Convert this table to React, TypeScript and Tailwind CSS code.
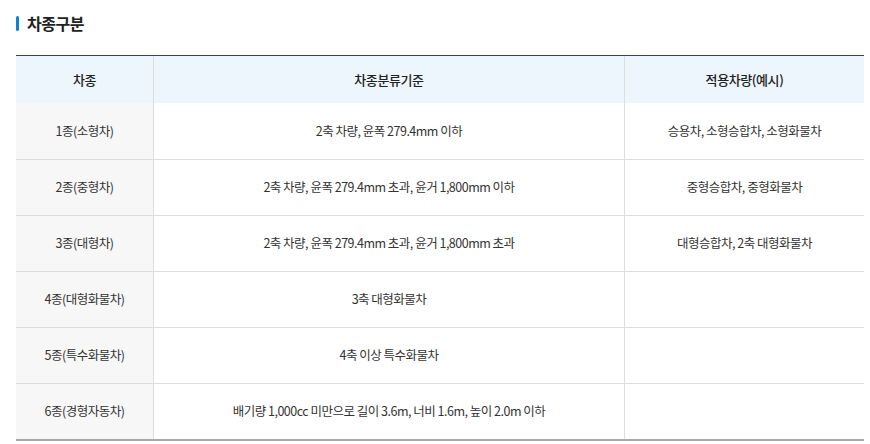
import React from 'react';

const rows = [
  { type: '1종(소형차)', rule: '2축 차량, 윤폭 279.4mm 이하', example: '승용차, 소형승합차, 소형화물차' },
  { type: '2종(중형차)', rule: '2축 차량, 윤폭 279.4mm 초과, 윤거 1,800mm 이하', example: '중형승합차, 중형화물차' },
  { type: '3종(대형차)', rule: '2축 차량, 윤폭 279.4mm 초과, 윤거 1,800mm 초과', example: '대형승합차, 2축 대형화물차' },
  { type: '4종(대형화물차)', rule: '3축 대형화물차', example: '' },
  { type: '5종(특수화물차)', rule: '4축 이상 특수화물차', example: '' },
  { type: '6종(경형자동차)', rule: '배기량 1,000cc 미만으로 길이 3.6m, 너비 1.6m, 높이 2.0m 이하', example: '' },
];

const App: React.FC = () => {
  return (
    <div
      className="w-[870px] h-[444px] bg-white overflow-hidden"
      style={{ fontFamily: '"Noto Sans CJK KR", "Noto Sans", sans-serif' }}
    >
      {/* Title */}
      <div className="flex items-center gap-2 pl-4 pt-[13px] h-[33px]">
        <span className="w-[3px] h-[15px] rounded-sm bg-[#0a84d6]" />
        <h2 className="text-[16px] font-bold text-[#222] tracking-[-0.5px] leading-none">차종구분</h2>
      </div>

      {/* Table */}
      <div className="ml-4 mt-[22px] w-[848px] border-t border-t-[#2b3f7a] border-b-2 border-b-[#a8a8a8]">
        <div className="grid grid-cols-[138px_471px_239px] h-[47px] bg-[#eef6fd] text-[13px] text-[#222] font-medium tracking-[-0.4px]">
          <div className="flex items-center justify-center border-r border-[#ddd]">차종</div>
          <div className="flex items-center justify-center border-r border-[#ddd]">차종분류기준</div>
          <div className="flex items-center justify-center">적용차량(예시)</div>
        </div>
        {rows.map((r, i) => (
          <div
            key={r.type}
            className={`grid grid-cols-[138px_471px_239px] h-[56px] text-[12.5px] text-[#333] tracking-[-0.5px] ${i > 0 ? 'border-t border-[#ddd]' : ''}`}
          >
            <div className="flex items-center justify-center bg-[#f7f7f7] border-r border-[#ddd]">{r.type}</div>
            <div className="flex items-center justify-center border-r border-[#ddd]">{r.rule}</div>
            <div className="flex items-center justify-center">{r.example}</div>
          </div>
        ))}
      </div>
    </div>
  );
};

export default App;
